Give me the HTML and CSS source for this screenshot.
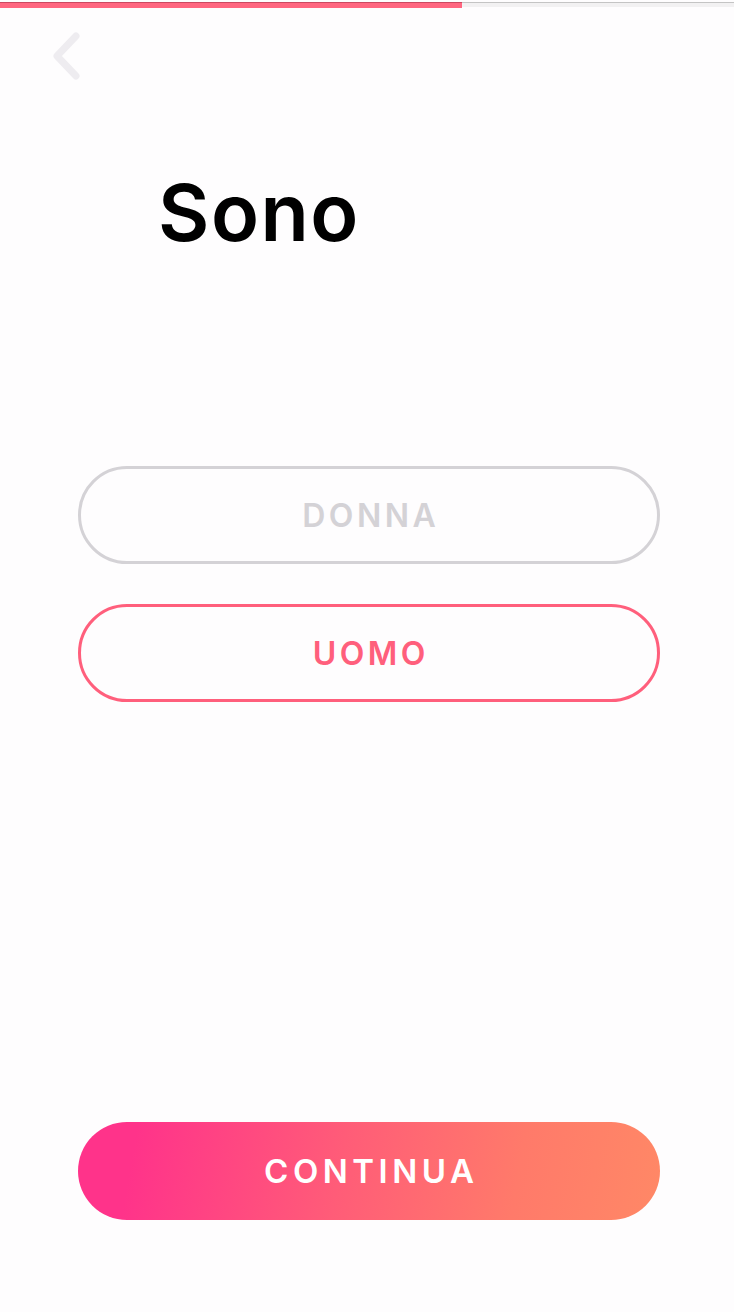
FILE: index.html
```html
<!DOCTYPE html>
<html lang="it">
<head>
<meta charset="utf-8">
<link rel="stylesheet" href="styles.css">
</head>
<body>
<div class="screen">
  <div class="progress"><div class="progress-fill"></div></div>
  <div class="topbar">
    <svg class="back" width="30" height="48" viewBox="0 0 30 48" aria-hidden="true">
      <polyline points="25,4 6,24 25,44" fill="none" stroke="#eeecf0" stroke-width="7" stroke-linecap="round" stroke-linejoin="round"/>
    </svg>
  </div>
  <h1 class="title">Sono</h1>
  <div class="options">
    <button class="option">DONNA</button>
    <button class="option selected">UOMO</button>
  </div>
  <button class="continue">CONTINUA</button>
</div>
</body>
</html>
```
FILE: styles.css
```css
html, body {
  margin: 0;
  padding: 0;
  background: #fefdfe;
}
.screen {
  width: 734px;
  height: 1312px;
  display: flex;
  flex-direction: column;
  font-family: "Inter", "Lato", sans-serif;
}
.progress {
  margin-top: 2px;
  height: 5px;
  background: #f2f1f2;
  border-top: 1px solid #c4c4c4;
  box-sizing: border-box;
}
.progress-fill {
  width: 462px;
  height: 6px;
  margin-top: -1px;
  background: #ff6680;
  border-top: 1px solid #cc4860;
  box-sizing: border-box;
}
.topbar {
  padding: 25px 0 0 51px;
  height: 48px;
}
.back { display: block; }
.title {
  margin: 0;
  padding: 82px 0 0 158px;
  font-size: 79px;
  font-weight: 600;
  letter-spacing: 1.5px;
  line-height: 100px;
  color: #000;
}
.options {
  margin-top: 204px;
  padding: 0 74px 0 78px;
  display: flex;
  flex-direction: column;
  gap: 40px;
}
.option {
  height: 98px;
  border: 3px solid #d4d2d6;
  border-radius: 49px;
  background: transparent;
  font-family: inherit;
  font-size: 32px;
  font-weight: 600;
  letter-spacing: 3.5px;
  color: #d4d2d6;
  padding: 0 0 0 3.5px;
}
.option.selected {
  border-color: #ff5f7c;
  color: #ff5f7c;
}
.continue {
  margin: auto 74px 92px 78px;
  height: 98px;
  border: 0;
  border-radius: 49px;
  background: linear-gradient(100deg, #ff338a 10%, #ff5c78 45%, #ff7a6a 75%, #ff8866 100%);
  color: #fff;
  font-family: inherit;
  font-size: 33px;
  font-weight: 600;
  letter-spacing: 4.5px;
  padding: 0 0 0 4.5px;
}
```
